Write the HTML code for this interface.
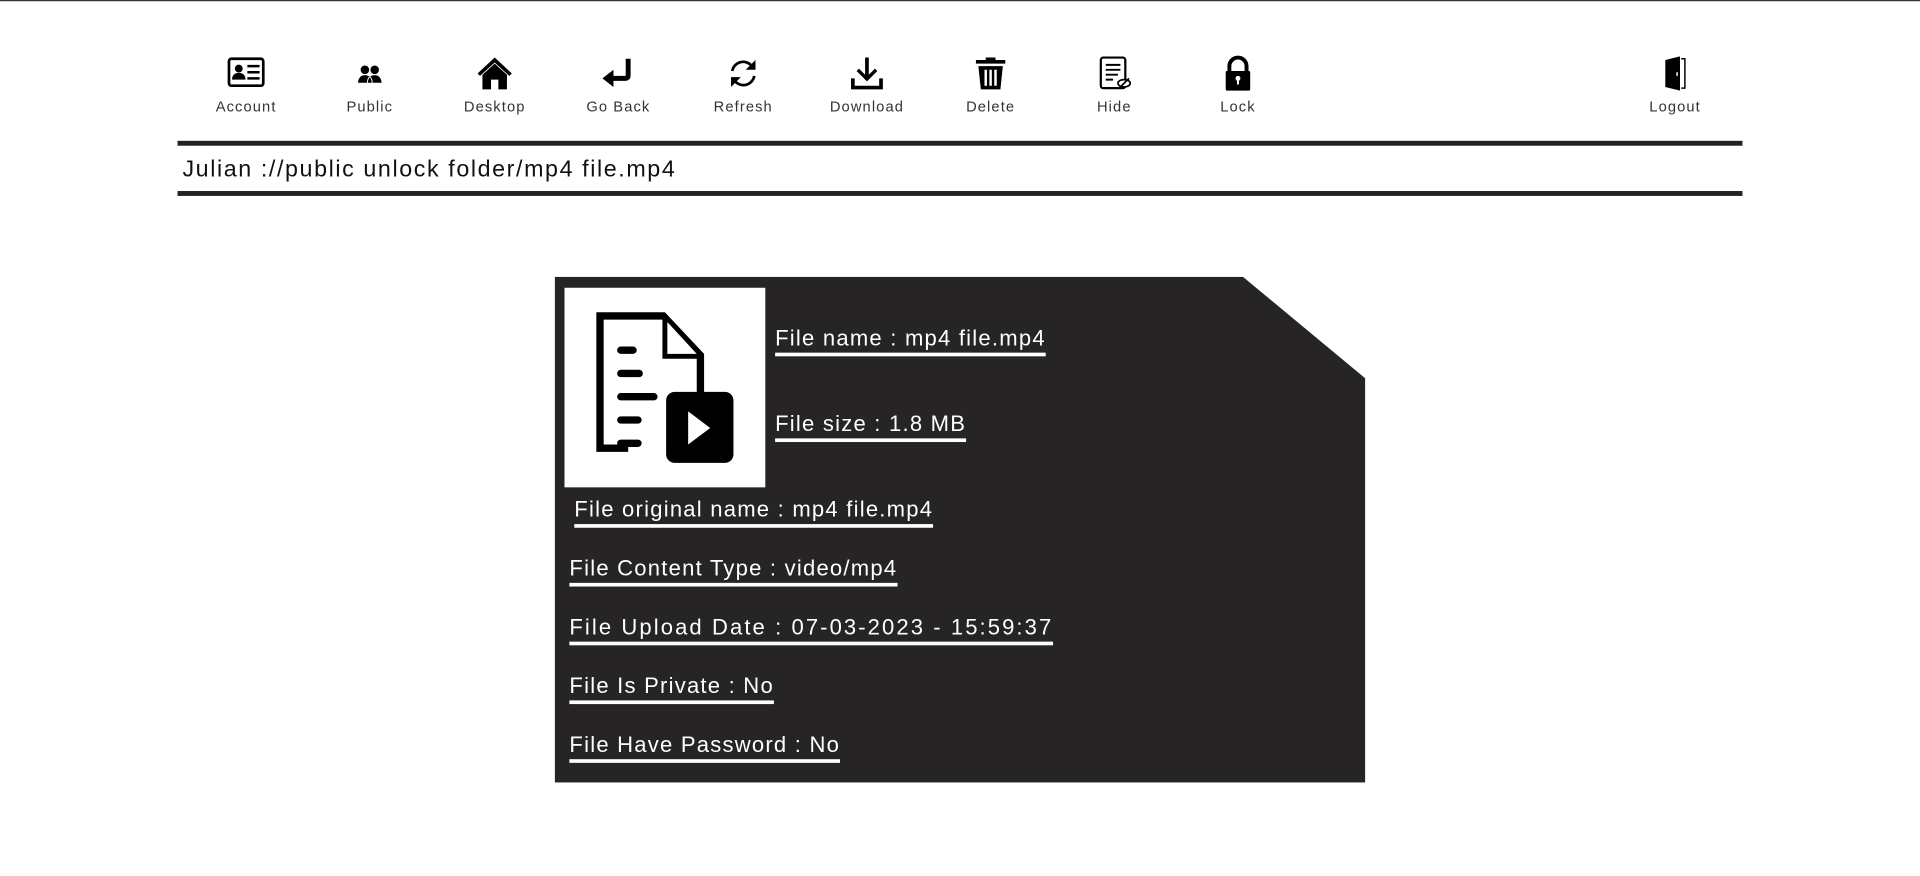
<!DOCTYPE html>
<html><head><meta charset="utf-8"><style>
html,body{margin:0;padding:0;background:#fff;overflow:hidden;width:1920px;height:875px}
#w{position:absolute;left:0;top:0;width:1568px;height:715px;transform:scale(1.22449);transform-origin:0 0;font-family:"Liberation Sans",sans-serif}
.topline{position:absolute;left:0;top:0;width:1568px;height:1px;background:#333}
.nav{position:absolute;top:44px;width:80px;text-align:center}
.nav svg{display:block;margin:0 auto;width:32px;height:32px}
.nav span{display:block;font-size:12px;color:#333;margin-top:4px;letter-spacing:0.9px}
.bar{position:absolute;left:145px;width:1278px;height:4px;background:#222}
.path{position:absolute;left:149px;top:128px;font-size:19px;color:#111;letter-spacing:1.3px}
.card{position:absolute;left:453px;top:226px;width:662px;height:413px;background:#262425;clip-path:polygon(0 0,562px 0,662px 83px,662px 413px,0 413px)}
.img{position:absolute;left:8px;top:9px;width:164px;height:163px;background:#fff}
.t{position:absolute;color:#fff;font-size:18px;border-bottom:3px solid #fff;padding-bottom:2px;line-height:20px;white-space:nowrap;letter-spacing:1px}
</style></head><body><div id="w">
<div class="topline"></div>

<div class="nav" style="left:161px"><svg viewBox="0 0 32 32"><rect x="2" y="4" width="28" height="22" rx="2" fill="none" stroke="#000" stroke-width="2.2"/><circle cx="10" cy="12" r="3.2"/><path d="M4.5 21c0-4 2.5-5.5 5.5-5.5s5.5 1.5 5.5 5.5z"/><path d="M17 10h10M17 15h10M17 20h10" stroke="#000" stroke-width="2"/></svg><span>Account</span></div>
<div class="nav" style="left:262px"><svg viewBox="0 0 32 32"><circle cx="12" cy="13" r="3.5"/><circle cx="20" cy="13" r="3.5"/><path d="M6 24c0-5 3-7 6-7s6 2 6 7zM14 24c0-5 3-7 6-7s6 2 6 7z" stroke="#fff" stroke-width="0.8"/></svg><span>Public</span></div>
<div class="nav" style="left:364px"><svg viewBox="0 0 32 32"><path d="M16 3L2 16l2 2L16 7l12 11 2-2z"/><path d="M6 17L16 8l10 9v12h-7v-8h-6v8H6z"/></svg><span>Desktop</span></div>
<div class="nav" style="left:465px"><svg viewBox="0 0 32 32"><path d="M22 4h4v14a4 4 0 0 1-4 4H12v5L3 20l9-7v5h10z"/></svg><span>Go Back</span></div>
<div class="nav" style="left:567px"><svg viewBox="0 0 32 32"><path d="M7 14a9 9 0 0 1 16-4" fill="none" stroke="#000" stroke-width="2.2"/><path d="M26 5v8h-8z"/><path d="M25 18a9 9 0 0 1-16 4" fill="none" stroke="#000" stroke-width="2.2"/><path d="M6 27v-8h8z"/></svg><span>Refresh</span></div>
<div class="nav" style="left:668px"><svg viewBox="0 0 32 32"><path d="M14.5 3h3v14l5-5 2 2-8.5 8.5L7.5 14l2-2 5 5z"/><path d="M3 20h3v6h20v-6h3v9H3z"/></svg><span>Download</span></div>
<div class="nav" style="left:769px"><svg viewBox="0 0 32 32"><path d="M12 3h8v2h8v3H4V5h8z"/><path d="M6 10h20l-2 19H8zM11 13v13h2V13zm4 0v13h2V13zm4 0v13h2V13z" fill-rule="evenodd"/></svg><span>Delete</span></div>
<div class="nav" style="left:870px"><svg viewBox="0 0 32 32"><rect x="5" y="3" width="20" height="25" rx="2" fill="none" stroke="#000" stroke-width="1.8"/><path d="M9 9h12M9 13h12M9 17h10M9 21h6" stroke="#000" stroke-width="1.6"/><ellipse cx="24" cy="24" rx="5" ry="3" fill="#fff" stroke="#000" stroke-width="1.4"/><path d="M20 28l8-8" stroke="#000" stroke-width="1.4"/></svg><span>Hide</span></div>
<div class="nav" style="left:971px"><svg viewBox="0 0 32 32"><path d="M9 15v-5a7 7 0 0 1 14 0v5" fill="none" stroke="#000" stroke-width="3.2"/><rect x="6" y="14" width="20" height="16" rx="1"/><circle cx="16" cy="20" r="2" fill="#fff"/><rect x="15.2" y="20" width="1.6" height="5" fill="#fff"/></svg><span>Lock</span></div>
<div class="nav" style="left:1328px"><svg viewBox="0 0 32 32"><path d="M8 5l12-3v28L8 27z"/><path d="M21 4h3v24h-3" fill="none" stroke="#000" stroke-width="1.2"/><rect x="17" y="15" width="1.2" height="3" fill="#fff"/></svg><span>Logout</span></div>

<div class="bar" style="top:115px"></div>
<div class="path">Julian ://public unlock folder/mp4 file.mp4</div>
<div class="bar" style="top:156px"></div>

<div class="card">
 <div class="img"><svg width="164" height="163" viewBox="0 0 164 163"><path d="M26 20h56l32 34v36h-6V58H80V26H32v102h20v6H26z"/><path d="M84 28v26h24z" fill="#fff"/><path d="M46 51h10M46 70h15M46 89h27M46 108h14M46 127h14" stroke="#000" stroke-width="6" stroke-linecap="round"/><rect x="83" y="85" width="55" height="58" rx="7"/><path d="M101 101v27l18-13.5z" fill="#fff"/></svg></div>
 <div class="t" style="left:180px;top:40px">File name : mp4 file.mp4</div>
 <div class="t" style="left:180px;top:110px">File size : 1.8 MB</div>
 <div class="t" style="left:16px;top:180px">File original name : mp4 file.mp4</div>
 <div class="t" style="left:12px;top:228px">File Content Type : video/mp4</div>
 <div class="t" style="left:12px;top:276px;letter-spacing:1.7px">File Upload Date : 07-03-2023 - 15:59:37</div>
 <div class="t" style="left:12px;top:324px">File Is Private : No</div>
 <div class="t" style="left:12px;top:372px">File Have Password : No</div>
</div>
</div></body></html>
